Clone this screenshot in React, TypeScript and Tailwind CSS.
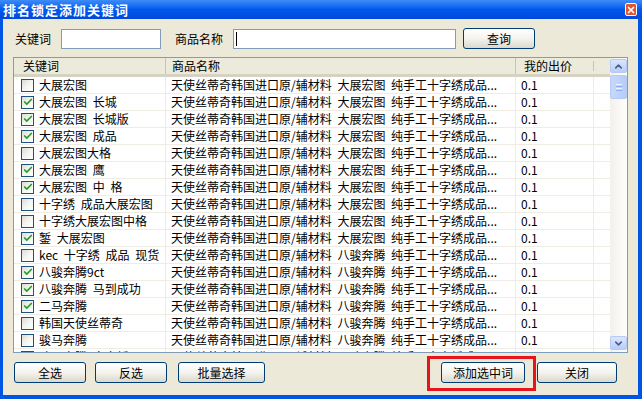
import { Check, ChevronDown, ChevronUp, X } from 'lucide-react';

interface Row {
    keyword: string;
    product: string;
    checked: boolean;
}

const P1 = '天使丝蒂奇韩国进口原/辅材料 大展宏图 纯手工十字绣成品...';
const P2 = '天使丝蒂奇韩国进口原/辅材料 八骏奔腾 纯手工十字绣成品...';

const rows: Row[] = [
    { keyword: '大展宏图', product: P1, checked: false },
    { keyword: '大展宏图 长城', product: P1, checked: true },
    { keyword: '大展宏图 长城版', product: P1, checked: true },
    { keyword: '大展宏图 成品', product: P1, checked: true },
    { keyword: '大展宏图大格', product: P1, checked: false },
    { keyword: '大展宏图 鹰', product: P1, checked: true },
    { keyword: '大展宏图 中 格', product: P1, checked: true },
    { keyword: '十字绣 成品大展宏图', product: P1, checked: false },
    { keyword: '十字绣大展宏图中格', product: P1, checked: false },
    { keyword: '錾 大展宏图', product: P1, checked: true },
    { keyword: 'kec 十字绣 成品 现货', product: P2, checked: false },
    { keyword: '八骏奔腾9ct', product: P2, checked: true },
    { keyword: '八骏奔腾 马到成功', product: P2, checked: true },
    { keyword: '二马奔腾', product: P2, checked: true },
    { keyword: '韩国天使丝蒂奇', product: P2, checked: false },
    { keyword: '骏马奔腾', product: P2, checked: false },
    { keyword: '骏马奔腾 十字绣', product: P2, checked: false },
];

function XpButton({ label, className }: { label: string; className: string }) {
    return (
        <button
            className={`h-[21px] rounded-[3px] border border-[#003C74] bg-gradient-to-b from-white via-[#F4F3EE] to-[#DCD9CC] text-[12px] text-black leading-none ${className}`}
        >
            {label}
        </button>
    );
}

function CheckBox({ checked }: { checked: boolean }) {
    return (
        <span className="flex h-[13px] w-[13px] shrink-0 items-center justify-center border border-[#1C5180] bg-gradient-to-br from-[#DCDCD7] via-[#F4F4F0] to-white">
            {checked && <Check className="h-[10px] w-[10px] text-[#21A121]" strokeWidth={4} />}
        </span>
    );
}

function App() {
    return (
        <div
            className="flex h-[399px] w-[642px] flex-col overflow-hidden bg-[#0055E5] text-[12px] text-black [word-spacing:3px]"
            style={{ fontFamily: '"Noto Sans CJK SC", "DejaVu Sans", sans-serif' }}
        >
            {/* title bar */}
            <div className="flex h-[19px] shrink-0 items-center justify-between bg-gradient-to-b from-[#3D8CF7] via-[#0058EE] to-[#0049DC] pl-[3px] pr-[5px]">
                <span className="text-[13px] font-bold leading-none tracking-[1px] text-white">排名锁定添加关键词</span>
                <span className="flex h-[13px] w-[12px] items-center justify-center rounded-[2px] border border-white bg-[#E0562F]">
                    <X className="h-[10px] w-[10px] text-white" strokeWidth={4} />
                </span>
            </div>

            {/* body */}
            <div className="relative ml-[3px] mr-[4px] mb-[4px] flex flex-1 flex-col bg-[#ECE9D8] px-[10px]">
                {/* search row */}
                <div className="mt-[9px] flex h-[21px] items-center">
                    <span className="ml-[2px] leading-none">关键词</span>
                    <input className="ml-[10px] h-[20px] w-[100px] border border-[#7F9DB9] bg-white outline-none" />
                    <span className="ml-[14px] leading-none">商品名称</span>
                    <div className="ml-[10px] flex h-[20px] w-[223px] items-center border border-[#7F9DB9] bg-white pl-[2px]">
                        <span className="h-[14px] w-[1px] bg-black" />
                    </div>
                    <XpButton label="查询" className="ml-[7px] w-[72px]" />
                </div>

                {/* list */}
                <div className="mt-[8px] flex h-[296px] border border-[#7F9DB9] bg-white">
                    <div className="flex min-w-0 flex-1 flex-col overflow-hidden">
                        <div className="flex h-[19px] shrink-0 border-b-[3px] border-[#D6D2C2] bg-[#EBEADB] leading-none">
                            <div className="flex w-[151px] items-center pl-[9px]">关键词</div>
                            <div className="flex w-[350px] items-center border-l border-[#C7C5B2] pl-[6px]">商品名称</div>
                            <div className="flex w-[78px] items-center border-l border-[#C7C5B2] pl-[8px]">我的出价</div>
                            <div className="my-[3px] w-[17px] border-l border-[#C7C5B2]" />
                        </div>
                        {rows.map((r, i) => (
                            <div key={i} className="flex h-[17px] shrink-0 border-b border-[#EFEDE3] leading-none">
                                <div className="flex w-[151px] items-center gap-[5px] overflow-hidden pl-[7px] whitespace-nowrap">
                                    <CheckBox checked={r.checked} />
                                    <span>{r.keyword}</span>
                                </div>
                                <div className="flex w-[350px] items-center overflow-hidden border-l border-[#EFEDE3] pl-[5px] whitespace-nowrap">
                                    {r.product}
                                </div>
                                <div className="flex w-[78px] items-center border-l border-[#EFEDE3] pl-[5px]">0.1</div>
                                <div className="w-[17px] border-l border-[#EFEDE3]" />
                            </div>
                        ))}
                    </div>

                    {/* scrollbar */}
                    <div className="flex w-[17px] shrink-0 flex-col bg-gradient-to-r from-[#F3F1EC] to-[#FEFEFB] py-[1px]">
                        <div className="flex h-[14px] items-center justify-center rounded-[2px] border border-[#B6CAF4] bg-gradient-to-b from-[#DAE6FD] to-[#B9CDF8]">
                            <ChevronUp className="h-[11px] w-[11px] text-[#4D6185]" strokeWidth={3.5} />
                        </div>
                        <div className="mt-[2px] flex h-[24px] flex-col items-center justify-center gap-[1px] rounded-[2px] border border-[#B6CAF4] bg-gradient-to-r from-[#C8D8FC] to-[#B6CCF8]">
                            <span className="h-[1px] w-[6px] bg-[#EEF3FE]" />
                            <span className="h-[1px] w-[6px] bg-[#8CB0F8]" />
                            <span className="h-[1px] w-[6px] bg-[#EEF3FE]" />
                            <span className="h-[1px] w-[6px] bg-[#8CB0F8]" />
                        </div>
                        <div className="flex-1" />
                        <div className="mb-[1px] flex h-[14px] items-center justify-center rounded-[2px] border border-[#B6CAF4] bg-gradient-to-b from-[#DAE6FD] to-[#B9CDF8]">
                            <ChevronDown className="h-[11px] w-[11px] text-[#4D6185]" strokeWidth={3.5} />
                        </div>
                    </div>
                </div>

                {/* bottom buttons */}
                <div className="mt-[9px] flex h-[21px] items-center">
                    <XpButton label="全选" className="ml-[1px] w-[72px]" />
                    <XpButton label="反选" className="ml-[9px] w-[72px]" />
                    <XpButton label="批量选择" className="ml-[11px] w-[87px]" />
                    <XpButton label="添加选中词" className="ml-[176px] w-[84px]" />
                    <XpButton label="关闭" className="ml-[12px] w-[80px]" />
                </div>

                {/* red highlight annotation */}
                <div className="pointer-events-none absolute left-[424px] top-[337px] h-[35px] w-[109px] border-[3px] border-[#E8141B]" />
            </div>
        </div>
    );
}

export default App;
